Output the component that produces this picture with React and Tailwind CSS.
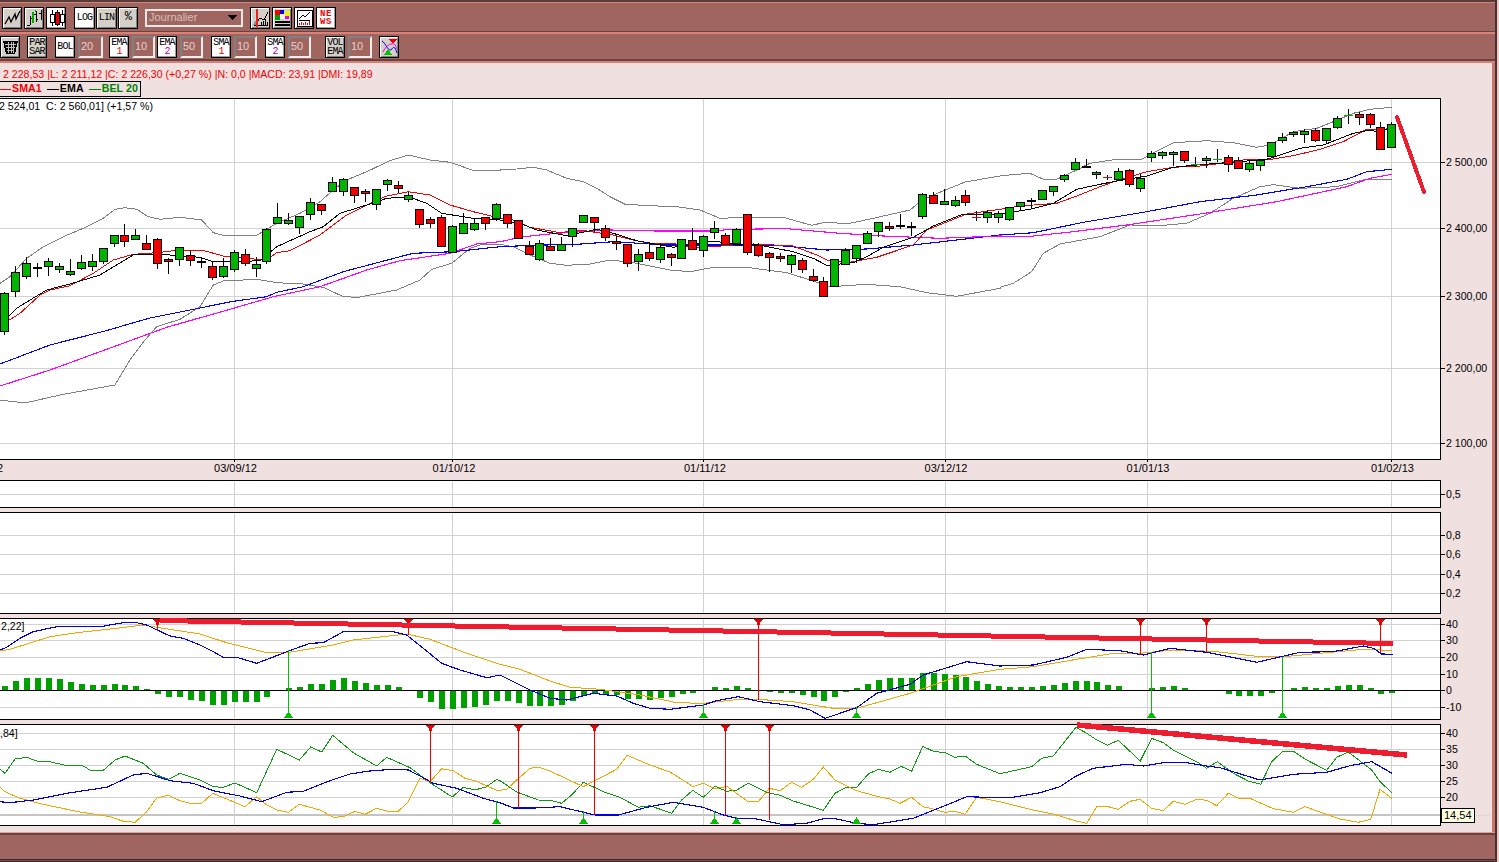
import React from "react";

const Z = (x0, y0, a) => a.map(([x, y]) => [x0 + x / 3, y0 + y / 3]);
const pts = (...segs) => segs.flat().map(([x, y]) => `${x.toFixed(1)},${y.toFixed(1)}`).join(" ");
const raw = (a) => a;

const Candles = [
  [0, 100, [[13,580,693,575,705,"g"],[46,515,574,498,590,"g"],[79,488,529,472,536,"g"],[112,502,505,490,530,"k"],[145,484,499,474,527,"g"],[178,499,506,490,520,"g"],[211,514,521,477,527,"g"],[244,487,503,465,510,"g"],[277,484,499,462,512,"g"],[310,445,484,445,491,"g"],[343,406,430,406,440,"g"],[373,406,424,372,440,"r"],[406,406,418,388,420,"g"],[439,428,448,405,450,"r"],[472,418,490,414,506,"r"],[505,478,484,474,522,"r"],[538,442,478,442,497,"g"],[571,464,481,452,497,"r"],[604,484,487,475,503,"k"],[637,497,532,485,540,"r"],[670,497,529,475,535,"g"],[703,455,508,450,515,"g"],[736,461,490,448,497,"r"],[769,493,505,472,531,"g"],[799,388,484,385,491,"g"],[832,352,370,310,372,"g"],[865,361,370,340,374,"g"],[898,349,382,349,402,"g"],[931,307,343,295,360,"g"],[964,313,331,313,345,"r"],[997,245,274,232,276,"g"],[1030,238,274,235,288,"g"],[1063,262,286,262,308,"r"],[1096,274,280,268,306,"r"],[1129,268,313,268,330,"g"],[1162,241,253,236,272,"g"],[1195,256,265,244,280,"r"],[1225,286,298,275,305,"g"],[1258,328,373,328,384,"r"],[1291,358,370,352,384,"r"],[1324,352,439,345,440,"r"],[1357,379,457,375,458,"g"],[1390,370,400,338,403,"g"],[1423,370,388,355,392,"g"],[1456,352,370,350,390,"r"],[1489,313,355,310,362,"g"]]],
  [500, 140, [[22,223,250,223,264,"r"],[55,241,293,241,298,"r"],[88,319,341,304,341,"r"],[118,310,356,300,362,"g"],[151,319,331,294,331,"r"],[184,313,331,292,331,"g"],[217,265,289,265,320,"g"],[250,226,247,224,250,"g"],[283,232,247,232,275,"r"],[316,265,292,256,304,"r"],[349,304,310,288,330,"r"],[382,313,370,313,381,"r"],[415,343,364,328,392,"g"],[448,337,355,313,362,"r"],[481,322,358,310,369,"g"],[514,343,352,340,378,"r"],[544,298,353,298,356,"g"],[577,301,328,265,330,"r"],[610,289,331,285,351,"g"],[643,265,277,244,298,"g"],[676,286,313,280,316,"r"],[709,268,310,265,312,"g"],[742,223,337,223,345,"r"],[775,316,346,310,350,"r"],[808,340,352,335,395,"r"],[841,349,355,340,365,"r"],[874,346,373,343,398,"g"],[907,361,388,355,398,"r"],[940,409,421,388,426,"r"],[970,424,469,412,469,"r"],[1003,358,437,358,440,"g"],[1036,331,373,325,375,"g"],[1069,316,355,316,368,"g"],[1102,280,310,274,310,"g"],[1135,247,274,247,290,"g"],[1168,259,265,247,273,"r"],[1201,254,257,222,267,"k"],[1234,257,260,246,289,"k"],[1267,163,229,160,236,"g"],[1300,166,190,157,190,"r"],[1333,184,193,148,193,"g"],[1366,181,196,168,200,"g"],[1396,166,187,150,197,"r"],[1429,232,232,214,242,"R"],[1462,217,232,211,248,"g"],[1495,220,232,214,249,"g"]]],
  [1000, 90, [[28,352,388,352,392,"g"],[61,337,349,337,364,"g"],[94,330,333,325,358,"k"],[127,301,328,301,331,"g"],[160,289,304,289,318,"g"],[193,256,268,253,275,"g"],[226,217,238,205,240,"g"],[259,229,232,208,232,"k"],[289,247,253,243,266,"g"],[322,262,262,256,270,"R"],[355,244,268,235,270,"g"],[388,241,283,238,290,"r"],[421,265,295,253,305,"g"],[454,190,202,182,215,"g"],[487,187,196,182,206,"g"],[520,187,192,182,228,"g"],[553,184,211,184,218,"r"],[586,223,223,202,232,"G"],[619,205,211,198,235,"g"],[652,208,208,178,215,"G"],[685,202,223,196,245,"r"],[715,211,235,202,238,"r"],[748,220,238,214,246,"g"],[781,211,226,208,242,"g"],[814,157,199,157,205,"g"],[847,142,151,130,158,"g"],[880,127,133,124,140,"g"],[913,124,133,118,158,"g"],[946,121,151,115,155,"r"],[979,115,151,115,162,"g"],[1012,85,112,79,117,"g"],[1045,76,76,58,101,"G"],[1078,73,82,65,105,"r"],[1111,73,103,68,115,"r"],[1141,112,178,97,178,"r"],[1174,103,172,97,172,"g"]]],
];

const bbUp = pts(
  Z(0,100,[[0,550],[30,530],[80,475],[130,440],[190,410],[250,385],[310,355],[345,328],[375,323],[410,328],[445,350],[480,358],[540,352],[605,360],[640,398],[670,406],[770,406],[830,370],[900,340],[960,305],[1000,270],[1040,240],[1100,215],[1170,182],[1225,165],[1290,180],[1350,187],[1425,213],[1500,211]]),
  Z(500,140,[[0,90],[50,87],[100,82],[140,90],[200,115],[250,125],[290,145],[330,170],[375,193],[450,197],[530,200],[600,210],[660,235],[740,232],[850,232],[935,256],[970,248],[1050,250],[1120,235],[1230,210],[1260,185],[1300,165],[1395,126],[1500,108]]),
  Z(1000,90,[[0,257],[90,250],[130,268],[170,268],[230,240],[270,220],[350,208],[420,210],[520,158],[620,152],[700,158],[770,172],[810,165],[880,125],[950,115],[1000,95],[1060,70],[1110,58],[1176,52]])
);
const bbLo = pts(
  raw([[0,400],[25,403],[60,395],[115,385],[130,360],[145,340]]),
  Z(0,100,[[470,680],[540,658],[600,620],[640,555],[670,543],[770,538],[830,548],[910,552],[970,562],[1030,590],[1075,592],[1190,570],[1260,540],[1295,508],[1355,490],[1410,445],[1440,435],[1500,433]]),
  Z(500,140,[[40,320],[90,345],[150,370],[200,376],[270,372],[330,360],[400,368],[510,390],[570,395],[640,382],[740,382],[860,398],[930,420],[990,440],[1100,433],[1200,440],[1280,458],[1370,469],[1500,445]]),
  Z(1000,90,[[0,592],[40,580],[95,545],[130,490],[180,462],[300,440],[390,405],[490,406],[560,400],[630,370],[700,325],[780,290],[820,284],[900,295],[1010,290],[1090,270],[1176,268]])
);
const sma = pts(
  raw([[0,330]]),
  Z(0,100,[[20,665],[60,640],[120,585],[150,570],[210,557],[280,520],[340,480],[400,463],[470,458],[540,450],[605,450],[670,468],[735,475],[800,480],[830,458],[870,452],[960,405],[1040,345],[1120,305],[1160,288],[1225,275],[1290,285],[1350,315],[1420,335],[1500,355]]),
  Z(500,140,[[40,240],[90,262],[180,278],[240,270],[340,285],[400,300],[450,310],[520,310],[570,322],[640,320],[700,315],[760,312],[880,318],[950,345],[980,360],[1040,368],[1130,352],[1240,315],[1280,270],[1400,222],[1500,208]]),
  Z(1000,90,[[60,348],[170,340],[230,318],[300,290],[350,272],[440,245],[520,232],[600,228],[680,218],[740,208],[800,210],[880,197],[960,178],[1030,155],[1100,118],[1140,120],[1170,115]])
);
const ema = pts(
  raw([[0,325]]),
  Z(0,100,[[20,655],[50,625],[90,600],[140,570],[210,552],[300,525],[400,465],[470,462],[600,472],[640,485],[700,485],[780,482],[830,440],[930,395],[970,380],[1020,340],[1100,315],[1160,295],[1225,290],[1280,310],[1325,340],[1420,355],[1500,360]]),
  Z(500,140,[[60,250],[110,270],[200,287],[290,268],[340,280],[410,302],[520,322],[640,303],[700,312],[760,312],[880,335],[940,355],[980,376],[1060,368],[1100,350],[1150,322],[1240,292],[1300,258],[1390,222],[1500,222]]),
  Z(1000,90,[[90,358],[160,340],[230,298],[300,283],[355,272],[440,258],[520,232],[600,224],[680,218],[800,208],[900,175],[970,165],[1060,130],[1110,120],[1140,128],[1170,112]])
);
const blue = pts(
  raw([[0,364],[50,345],[105,331],[150,318]]),
  Z(0,100,[[700,604],[800,590],[830,577],[910,560],[1030,515],[1200,470],[1240,460],[1360,455],[1500,440]]),
  Z(500,140,[[100,316],[230,313],[340,305],[500,315],[710,315],[820,315],[980,330],[1100,327],[1240,315],[1500,285]]),
  Z(1000,90,[[100,428],[250,397],[430,367],[600,335],[770,315],[920,290],[1040,268],[1100,245],[1176,238]])
);
const mag = pts(
  raw([[0,386],[50,370],[132,340]]),
  Z(0,100,[[500,682],[700,625],[820,590],[960,560],[1100,510],[1200,482],[1350,460],[1430,432],[1500,425]]),
  Z(500,140,[[70,290],[170,280],[330,270],[470,273],[630,273],[700,268],[860,266],[1020,280],[1150,288],[1320,295],[1500,288]]),
  Z(1000,90,[[80,440],[220,425],[380,405],[600,372],[830,335],[1040,290],[1110,265],[1176,253]])
);

const macdBlue = pts(
  Z(0,610,[[0,120],[20,112],[60,85],[100,65],[170,50],[300,50],[370,38],[410,38],[440,45],[510,78],[550,85],[600,105],[640,125],[670,142],[710,142],[770,160],[810,145],[860,125],[930,100],[970,98],[1030,65],[1090,65],[1180,65],[1220,75],[1270,115],[1325,160],[1380,180],[1460,203],[1500,195]]),
  Z(500,610,[[40,215],[90,240],[150,265],[200,270],[280,250],[350,258],[400,280],[450,295],[510,298],[610,285],[650,272],[715,260],[780,275],[880,287],[930,300],[975,325],[1070,293],[1130,250],[1230,223],[1270,195],[1400,155],[1500,168]]),
  Z(1000,610,[[100,165],[200,142],[260,118],[360,122],[430,135],[510,115],[620,127],[770,157],[900,127],[1000,125],[1090,108],[1120,115],[1145,132],[1178,133]])
);
const macdOr = pts(
  Z(0,610,[[0,123],[30,118],[150,80],[230,68],[350,55],[430,45],[470,52],[600,72],[680,98],[800,128],[860,128],[1000,105],[1060,90],[1220,72],[1290,88],[1400,130],[1500,163]]),
  Z(500,610,[[60,178],[150,213],[210,232],[300,238],[420,255],[530,278],[610,280],[700,270],[770,268],[880,275],[1000,295],[1070,295],[1230,250],[1370,200],[1500,178]]),
  Z(1000,610,[[100,170],[230,148],[340,130],[420,130],[520,120],[640,124],[780,140],[850,140],[960,130],[1090,118],[1140,120],[1176,120]])
);
const bars = [
  [0,[[15,228],[48,213],[81,204],[114,204],[147,204],[180,207],[213,216],[246,222],[279,225],[312,225],[345,222],[375,225],[408,228],[441,238],[474,252],[507,261],[540,261],[573,270],[606,273],[639,285],[672,285],[705,276],[738,276],[771,276],[801,261],[867,234],[900,231],[933,222],[966,222],[999,210],[1032,204],[1065,213],[1098,219],[1131,225],[1164,225],[1197,231],[1260,264],[1293,276],[1326,297],[1359,297],[1392,294],[1425,291],[1458,285],[1491,273]]],
  [500,[[24,273],[57,279],[90,288],[120,288],[153,288],[186,285],[219,273],[252,257],[285,250],[318,253],[351,255],[384,267],[417,267],[450,270],[483,264],[516,261],[549,252],[579,249],[645,231],[678,234],[711,228],[744,234],[810,246],[843,249],[876,249],[909,255],[942,261],[972,273],[1005,261],[1038,246],[1071,234],[1104,222],[1137,210],[1170,204],[1203,204],[1236,204],[1269,189],[1302,189],[1335,192],[1368,195],[1398,201],[1431,213],[1464,222],[1497,228]]],
  [1000,[[30,231],[63,231],[96,231],[129,228],[162,225],[195,219],[228,213],[261,213],[291,216],[324,225],[357,228],[456,234],[489,231],[522,228],[555,234],[654,244],[687,252],[717,258],[750,258],[783,258],[816,249],[882,234],[915,231],[948,234],[981,234],[1014,228],[1047,225],[1080,225],[1113,234],[1143,252],[1176,249]]],
];

const dmiGreen = pts(
  Z(0,610,[[0,478],[15,490],[45,447],[80,442],[110,453],[150,455],[200,467],[250,468],[275,483],[310,481],[345,450],[375,438],[430,460],[470,495],[505,508],[540,490],[600,510],[640,530],[670,532],[705,519],[770,548],[830,418],[898,450],[932,411],[965,426],[998,376],[1060,428],[1130,468],[1160,442],[1230,473],[1290,518],[1357,561],[1390,532],[1425,540],[1460,530],[1490,508],[1500,512]]),
  Z(500,610,[[50,546],[115,570],[150,571],[185,580],[215,555],[250,517],[315,547],[360,562],[415,592],[450,587],[515,610],[545,570],[578,541],[610,562],[645,529],[680,544],[710,540],[745,520],[800,547],[840,556],[880,573],[970,601],[1005,550],[1040,531],[1070,532],[1105,492],[1135,478],[1170,487],[1203,469],[1235,484],[1268,409],[1300,424],[1335,428],[1365,442],[1395,438],[1430,463],[1500,491]]),
  Z(1000,610,[[95,470],[125,445],[160,438],[228,352],[260,370],[290,390],[322,406],[355,391],[421,453],[455,385],[490,398],[520,420],[590,455],[620,475],[652,455],[700,490],[745,513],[782,523],[815,455],[848,424],[880,424],[920,450],[980,481],[1010,442],[1045,426],[1115,480],[1140,515],[1176,548]])
);
const dmiOr = pts(
  Z(0,610,[[0,532],[15,545],[60,565],[130,583],[235,605],[330,620],[370,634],[405,637],[440,605],[470,564],[505,556],[540,572],[570,580],[605,580],[638,550],[700,575],[735,590],[770,560],[800,585],[830,600],[865,607],[898,583],[960,600],[1000,622],[1030,620],[1065,604],[1095,613],[1130,595],[1160,603],[1195,604],[1225,575],[1260,505],[1290,516],[1325,476],[1360,482],[1395,505],[1425,512],[1490,541],[1500,541]]),
  Z(500,610,[[20,538],[50,510],[90,475],[115,471],[150,483],[250,530],[350,478],[382,436],[450,465],[510,486],[580,530],[610,520],[645,537],[680,529],[745,575],[775,575],[808,535],[840,542],[875,517],[905,532],[940,508],[970,471],[1005,510],[1070,542],[1135,560],[1170,567],[1200,580],[1235,562],[1268,590],[1300,597],[1335,607],[1365,604],[1395,613],[1430,562],[1500,575]]),
  Z(1000,610,[[100,600],[160,612],[225,632],[260,640],[290,590],[325,590],[355,598],[390,574],[420,568],[455,595],[490,602],[520,574],[555,583],[590,568],[620,571],[650,587],[685,550],[715,565],[750,565],[820,596],[880,607],[915,590],[1020,627],[1075,637],[1112,628],[1140,538],[1176,565]])
);
const dmiBlue = pts(
  Z(0,610,[[0,575],[30,578],[100,570],[200,550],[320,532],[400,495],[440,490],[510,512],[580,520],[640,542],[720,558],[785,575],[860,547],[910,544],[990,512],[1050,492],[1100,484],[1175,478],[1225,480],[1260,498],[1300,520],[1370,535],[1450,565],[1500,578]]),
  Z(500,610,[[40,594],[105,594],[180,590],[285,615],[355,615],[440,592],[520,577],[610,592],[670,615],[710,625],[760,625],[850,644],[920,640],[975,625],[1010,627],[1070,640],[1120,644],[1240,625],[1340,585],[1400,560],[1500,563]]),
  Z(1000,610,[[40,562],[120,548],[180,530],[230,497],[280,475],[380,463],[430,468],[490,458],[560,458],[620,468],[660,473],[780,510],[880,493],[980,487],[1050,467],[1115,455],[1176,490]])
);

const VX = [234.5, 452.5, 703.5, 945.5, 1147.5, 1391.5];

function Panel({ top, height, hl = [], heavy, labels = [], children, mt }) {
  return (
    <div className={`relative w-[1441px] shrink-0 border-y border-r border-black bg-white ${mt}`} style={{ height }}>
      <svg width="1440" height={height - 2} viewBox={`0 ${top + 1} 1440 ${height - 2}`} className="block overflow-visible" shapeRendering="crispEdges">
        {hl.map((y) => <line key={y} x1="0" x2="1440" y1={y} y2={y} stroke="#d2d2d2" />)}
        {heavy}
        {VX.map((x) => <line key={x} x1={x} x2={x} y1={top + 1} y2={top + height - 1} stroke="#d2d2d2" />)}
        {children}
        {labels.map(([t, y]) => (
          <g key={t}>
            <line x1="1441" x2="1445" y1={y + 0.5} y2={y + 0.5} stroke="#000" />
            <text x="1446" y={y + 4} fontSize="10.6" fill="#000" shapeRendering="auto">{t}</text>
          </g>
        ))}
      </svg>
    </div>
  );
}

const Down = ({ x, top, to }) => (
  <g>
    <line x1={x + 0.5} x2={x + 0.5} y1={top} y2={to} stroke="#f00000" />
    <polygon points={`${x - 4},${top} ${x + 5},${top} ${x + 2},${top + 4} ${x + 2},${top + 5} ${x + 0.5},${top + 7} ${x - 1},${top + 5} ${x - 1},${top + 4}`} fill="#f00000" />
  </g>
);
const Up = ({ x, from, bottom }) => (
  <g>
    <line x1={x + 0.5} x2={x + 0.5} y1={from} y2={bottom} stroke="#00c000" />
    <polygon points={`${x - 4},${bottom} ${x + 5},${bottom} ${x + 0.5},${bottom - 7}`} fill="#00c000" />
  </g>
);

const Bevel = ({ on, className = "w-[20px]", children }) => (
  <div className={`flex h-[22px] shrink-0 items-center justify-center border border-black font-['Liberation_Mono'] text-[10px] leading-[9px] tracking-[-0.8px] text-black ${on ? "bg-white shadow-[inset_-1px_-1px_0_#a0a0a0]" : "bg-[#d4d0c8] shadow-[inset_1px_1px_0_#ffffff,inset_-1px_-1px_0_#808080]"} ${className}`}>
    {children}
  </div>
);
const Two = ({ a, b, cb }) => (
  <div className="flex flex-col items-center">
    <span>{a}</span>
    <span className={cb}>{b}</span>
  </div>
);
const Field = ({ v, className = "" }) => (
  <div className={`flex h-[22px] shrink-0 items-center border-2 border-t-[#808080] border-l-[#808080] border-r-[#eeeeee] border-b-[#eeeeee] pl-[1px] text-[11px] text-[#e0d2d2] ${className}`}>{v}</div>
);

const Icon = ({ children }) => <svg width="17" height="18" viewBox="0 0 17 18" shapeRendering="crispEdges">{children}</svg>;

export default function App() {
  return (
    <div className="relative flex h-[862px] w-[1499px] overflow-hidden bg-[#e8c8c4] font-['Liberation_Sans',Arial,sans-serif]">
      <div className="flex h-full w-[1495px] shrink-0 flex-col bg-[#a0655f]">
        <div className="h-[3px] shrink-0 border-t-2 border-[#5c3a38] bg-[#c88880]" />
        {/* toolbar 1 */}
        <div className="flex h-[29px] shrink-0 items-center border-b border-[#6a4340] pt-[1px] pl-[2px]">
          <Bevel>
            <Icon><polyline points="1,15 5,8 7,13 11,5 12,10 16,2" fill="none" stroke="#000" strokeWidth="1.3" shapeRendering="auto" /></Icon>
          </Bevel>
          <Bevel className="ml-[2px] w-[20px]">
            <Icon>
              <path d="M1 16H4M4 7V16M4 9H6M10 2V13M8 5H10M10 10H12M15 1V11M13 4H15M15 8H16" stroke="#000" fill="none" />
              <path d="M7 3V14" stroke="#00b000" strokeWidth="2" fill="none" />
              <path d="M9 1V3" stroke="#00b000" strokeWidth="1" fill="none" />
            </Icon>
          </Bevel>
          <Bevel on className="ml-[2px] w-[20px]">
            <Icon>
              <path d="M4 1V17M9 1V17M14 1V17" stroke="#000" fill="none" />
              <rect x="2" y="5" width="4" height="8" fill="#fff" stroke="#000" />
              <rect x="7" y="3" width="4" height="12" fill="#f00000" stroke="#000" />
              <rect x="12" y="5" width="4" height="8" fill="#fff" stroke="#000" />
            </Icon>
          </Bevel>
          <Bevel on className="ml-[8px] w-[21px]">LOG</Bevel>
          <Bevel className="ml-[1px] w-[21px]">LIN</Bevel>
          <Bevel className="ml-[1px] w-[20px] text-[12px]">%</Bevel>
          <div className="ml-[7px] flex h-[18px] w-[98px] shrink-0 items-center justify-between border-2 border-[#e8e8e8] bg-[#a0655f] pl-[2px] pr-[4px] text-[11px] text-[#d4c0bc]">
            <span>Journalier</span>
            <svg width="9" height="5" viewBox="0 0 9 5" shapeRendering="crispEdges"><polygon points="0,0 9,0 4.5,5" fill="#000" /></svg>
          </div>
          <Bevel className="ml-[7px] w-[20px]">
            <Icon>
              <rect x="0" y="0" width="17" height="18" fill="#d4d0c8" />
              <path d="M4 14L8 9L12 11L16 3" stroke="#000" fill="none" />
              <path d="M2 16H16M9 16V13M11 16V12M13 16V10M15 16V13" stroke="#000" />
              <path d="M5 0V18" stroke="#f02020" strokeWidth="2" />
              <path d="M1 16L4 11V16Z" fill="#909090" />
            </Icon>
          </Bevel>
          <Bevel className="ml-[2px] w-[20px]">
            <Icon>
              <rect x="1" y="1" width="5" height="5" fill="#f00000" /><rect x="6" y="1" width="4" height="4" fill="#0000e0" /><rect x="11" y="2" width="5" height="5" fill="#f0f000" />
              <rect x="1" y="6" width="5" height="5" fill="#00a000" /><rect x="6" y="5" width="5" height="5" fill="#f0f0f0" /><rect x="11" y="7" width="4" height="3" fill="#f000f0" />
              <path d="M1 13H16M1 16H16" stroke="#000" strokeWidth="1.5" />
            </Icon>
          </Bevel>
          <Bevel className="ml-[2px] w-[20px]">
            <Icon>
              <rect x="0" y="0" width="17" height="18" fill="#fff" />
              <path d="M1 1H16V17H1Z" fill="none" stroke="#000" />
              <path d="M3 10L7 6L9 8L14 3" stroke="#000" fill="none" />
              <path d="M3 11H14" stroke="#000" />
              <path d="M3 16V14M5 16V13M7 16V14M9 16V13M11 16V14M13 16V12" stroke="#f00000" />
            </Icon>
          </Bevel>
          <Bevel on className="ml-[2px] w-[20px] bg-[#f4f4f4]">
            <div className="flex flex-col items-center text-[9px] font-bold leading-[8px] tracking-[0.5px] text-[#f00000]">
              <span>NE</span>
              <span>WS</span>
            </div>
          </Bevel>
        </div>
        <div className="h-[2px] shrink-0 bg-[#dc8078]" />
        {/* toolbar 2 */}
        <div className="flex h-[27px] shrink-0 items-center border-b-2 border-[#6a4340]">
          <Bevel>
            <Icon>
              <polygon points="1,3 16,3 13,16 4,16" fill="#000" />
              <path d="M3 6H14M4 9H13M5 12H12M6 4V15M9 4V15M11 4V15" stroke="#c0c0c0" />
            </Icon>
          </Bevel>
          <Bevel className="ml-[7px] w-[20px]"><Two a="PAR" b="SAR" /></Bevel>
          <Bevel on className="ml-[8px] w-[20px]">BOL</Bevel>
          <Field v="20" className="ml-[3px] w-[25px]" />
          <Bevel on className="ml-[6px] w-[20px]"><Two a="EMA" b="1" cb="text-[#f00000]" /></Bevel>
          <Field v="10" className="ml-[3px] w-[23px]" />
          <Bevel on className="ml-[2px] w-[20px]"><Two a="EMA" b="2" cb="text-[#b000b0]" /></Bevel>
          <Field v="50" className="ml-[3px] w-[23px]" />
          <Bevel on className="ml-[8px] w-[20px]"><Two a="SMA" b="1" cb="text-[#f00000]" /></Bevel>
          <Field v="10" className="ml-[3px] w-[23px]" />
          <Bevel on className="ml-[8px] w-[20px]"><Two a="SMA" b="2" cb="text-[#b000b0]" /></Bevel>
          <Field v="50" className="ml-[3px] w-[23px]" />
          <Bevel className="ml-[14px] w-[20px]"><Two a="VOL" b="EMA" /></Bevel>
          <Field v="10" className="ml-[3px] w-[24px]" />
          <Bevel className="ml-[7px] w-[20px]">
            <Icon>
              <path d="M1 3C5 5 7 15 11 11C13 8 14 9 16 15" stroke="#0000e0" fill="none" shapeRendering="auto" />
              <path d="M2 14C5 8 9 5 13 6C15 7 15 9 16 11" stroke="#f000f0" fill="none" shapeRendering="auto" />
              <polygon points="8,1 16,1 12,6" fill="#f00000" />
              <polygon points="3,17 11,17 7,11" fill="#00c000" />
            </Icon>
          </Bevel>
        </div>
        <div className="flex min-h-0 flex-1 border-t-2 border-[#d88078]">
          {/* pink work area */}
          <div className="flex w-[1492px] shrink-0 flex-col bg-[#f0e0e0]">
            <div className="h-[18px] shrink-0 whitespace-pre pt-[4px] pl-[3px] text-[10.6px] leading-[14px] text-[#f00000]">2 228,53 |L: 2 211,12 |C: 2 226,30 (+0,27 %) |N: 0,0 |MACD: 23,91 |DMI: 19,89</div>
            <div className="flex h-[16px] w-[141px] shrink-0 items-center gap-[5px] border border-l-0 border-black text-[10.6px] font-bold tracking-[0.1px]">
              <span className="whitespace-pre text-[#f00000]"><span className="mr-[1px] inline-block h-[1px] w-[11px] bg-[#f00000] align-middle" />SMA1</span>
              <span className="whitespace-pre text-black"><span className="mr-[1px] inline-block h-[1px] w-[12px] bg-black align-middle" />EMA</span>
              <span className="whitespace-pre text-[#008000]"><span className="mr-[1px] inline-block h-[1px] w-[12px] bg-[#008000] align-middle" />BEL 20</span>
            </div>
            <Panel
              top={98} height={362} mt="mt-[1px]"
              hl={[162.5, 228.5, 296.5, 368.5, 443.5]}
              labels={[["2 500,00",162],["2 400,00",228],["2 300,00",296],["2 200,00",368],["2 100,00",443]]}
            >
              <text x="-1" y="110" fontSize="10.6" fill="#000" shapeRendering="auto" className="whitespace-pre">2 524,01  C: 2 560,01] (+1,57 %)</text>
              <polyline points={bbUp} fill="none" stroke="#808080" />
              <polyline points={bbLo} fill="none" stroke="#808080" />
              <polyline points={blue} fill="none" stroke="#0000ff" strokeWidth="1.1" />
              <polyline points={mag} fill="none" stroke="#ff00ff" strokeWidth="1.1" />
              <polyline points={sma} fill="none" stroke="#f00000" />
              <polyline points={ema} fill="none" stroke="#000000" />
              {Candles.flatMap(([x0, y0, list]) => list.map(([x, t, b, h, l, c]) => {
                const cx = Math.round(x0 + x / 3) + 0.5;
                const T = Math.round(y0 + t / 3), B = Math.round(y0 + b / 3);
                const H = Math.round(y0 + h / 3), L = Math.round(y0 + l / 3);
                const doji = c === "R" ? "#f00000" : c === "G" ? "#00b000" : null;
                return (
                  <g key={`${x0}-${x}`}>
                    <line x1={cx} x2={cx} y1={H} y2={L} stroke="#000" />
                    {doji ? (
                      <line x1={cx - 4.5} x2={cx + 4.5} y1={T + 0.5} y2={T + 0.5} stroke={doji} />
                    ) : c === "k" ? (
                      <rect x={cx - 4.5} y={T} width="9" height="2" fill="#000" />
                    ) : (
                      <rect x={cx - 4} y={T + 0.5} width="8" height={Math.max(B - T, 1)} fill={c === "g" ? "#00b400" : "#f00000"} stroke="#000" />
                    )}
                  </g>
                );
              }))}
              <line x1="1397" y1="117" x2="1424" y2="192" stroke="#ed1c2e" strokeWidth="4" strokeLinecap="round" />
              {VX.map((x) => <line key={x} x1={x} x2={x} y1="459" y2="462" stroke="#000" />)}
              {[["2",0],["03/09/12",235.5],["01/10/12",454],["01/11/12",705],["03/12/12",946],["01/01/13",1148],["01/02/13",1392.5]].map(([t, x]) => (
                <text key={t} x={x} y="472" fontSize="11" fill="#000" textAnchor="middle" shapeRendering="auto">{t}</text>
              ))}
            </Panel>
            <Panel top={480} height={28} mt="mt-[20px]" hl={[494.5]} labels={[["0,5",494]]} />
            <Panel top={512} height={102} mt="mt-[4px]" hl={[535.5, 554.5, 574.5, 593.5]} labels={[["0,8",535],["0,6",554],["0,4",574],["0,2",593]]} />
            <Panel
              top={618} height={102} mt="mt-[4px]"
              hl={[624.5, 640.5, 657.5, 674.5, 707.5]}
              labels={[["40",624],["30",640],["20",657],["10",674],["0",690],["-10",707]]}
            >
              <text x="1" y="630" fontSize="10.6" fill="#000" shapeRendering="auto">2,22]</text>
              {bars.flatMap(([x0, list]) => list.map(([x, y]) => {
                const px = Math.round(x0 + x / 3) - 3;
                const v = Math.round(610 + y / 3);
                const yt = Math.min(v, 690), h = Math.abs(v - 690);
                return <rect key={`${x0}-${x}`} x={px} y={yt} width="6" height={h} fill="#00a000" />;
              }))}
              <line x1="0" x2="1440" y1="690.5" y2="690.5" stroke="#000" />
              <polyline points={macdOr} fill="none" stroke="#f0a800" />
              <polyline points={macdBlue} fill="none" stroke="#0000e0" strokeWidth="1.15" />
              <Down x={157} top={619} to={631} />
              <Down x={408} top={619} to={635} />
              <Down x={758} top={619} to={700} />
              <Down x={1140} top={619} to={655} />
              <Down x={1206} top={619} to={652} />
              <Down x={1380} top={619} to={653} />
              <Up x={288} from={650} bottom={718} />
              <Up x={703} from={704} bottom={718} />
              <Up x={856} from={707} bottom={718} />
              <Up x={1151} from={652} bottom={718} />
              <Up x={1282} from={657} bottom={718} />
              <line x1="160" y1="620.5" x2="1393" y2="643.5" stroke="#ed1c2e" strokeWidth="5" />
            </Panel>
            <Panel
              top={724} height={102} mt="mt-[4px]"
              hl={[733.5, 749.5, 765.5, 781.5, 797.5]}
              heavy={<line x1="0" x2="1440" y1="815" y2="815" stroke="#c4c4c4" strokeWidth="2" />}
              labels={[["40",733],["35",749],["30",765],["25",781],["20",797]]}
            >
              <text x="0" y="737" fontSize="10.6" fill="#000" shapeRendering="auto">,84]</text>
              <polyline points={dmiGreen} fill="none" stroke="#109810" />
              <polyline points={dmiOr} fill="none" stroke="#f0a800" />
              <polyline points={dmiBlue} fill="none" stroke="#0000e0" strokeWidth="1.15" />
              <Down x={430} top={725} to={782} />
              <Down x={518} top={725} to={808} />
              <Down x={594} top={725} to={815} />
              <Down x={725} top={725} to={815} />
              <Down x={769} top={725} to={820} />
              <Up x={496} from={801} bottom={824} />
              <Up x={583} from={811} bottom={824} />
              <Up x={714} from={811} bottom={824} />
              <Up x={736} from={818} bottom={824} />
              <Up x={856} from={820} bottom={824} />
              <line x1="1077" y1="725" x2="1407" y2="755" stroke="#ed1c2e" strokeWidth="5.5" />
              <line x1="1476" x2="1491" y1="815" y2="815" stroke="#e0d8d8" />
            </Panel>
          </div>
          <div className="flex-1 bg-[#c87870]" />
        </div>
        {/* bottom bar */}
        <div className="h-[3px] shrink-0 border-t border-[#e0a098] bg-[#6a4340]" />
        <div className="h-[24px] shrink-0 bg-[#a0655f]" />
        <div className="h-[3px] shrink-0 border-y border-[#3c2a28] bg-[#6a5050]" />
      </div>
      <div className="w-[2px] shrink-0 bg-[#4a3030]" />
      <div className="flex-1 bg-[#e8c8c4]" />
      <div className="absolute left-[1441px] top-[808px] border border-black bg-[#ffffe1] px-[2px] text-[11px] leading-[13px] text-black">14,54</div>
    </div>
  );
}
